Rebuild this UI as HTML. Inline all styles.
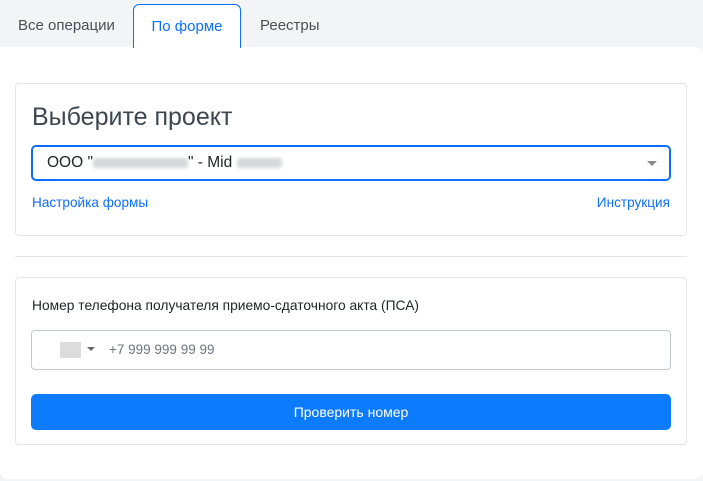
<!DOCTYPE html><html><head><meta charset="utf-8"><style>
*{box-sizing:border-box;margin:0;padding:0}
body{width:703px;height:481px;background:#f3f4f6;font-family:"Liberation Sans",sans-serif;position:relative;overflow:hidden;color:#212529}
.tab{position:absolute;top:4px;height:44px;line-height:44px;font-size:15px;color:#495057}
.act{left:133px;width:108px;border:1px solid #0d6efd;border-bottom:none;border-radius:6px 6px 0 0;background:#fff;text-align:center;color:#0d6efd;z-index:2}
.panel{position:absolute;left:0;top:47px;width:703px;height:432px;background:#fff;border-radius:0 8px 8px 8px}
.card{position:absolute;left:15px;width:672px;border:1px solid #e3e5e8;border-radius:4px;background:#fff}
a{color:#0d6efd;text-decoration:none;font-size:13.6px;position:absolute}
.blur{display:inline-block;height:10px;background:#d6d8dc;border-radius:3px;filter:blur(1.5px);vertical-align:middle}
</style></head><body>
<div class="tab" style="left:18px">Все операции</div>
<div class="tab act">По форме</div>
<div class="tab" style="left:260px">Реестры</div>
<div class="panel">
<div class="card" style="top:36px;height:153px">
<div style="position:absolute;left:16px;top:19px;font-size:25px;color:#3d4752">Выберите проект</div>
<div style="position:absolute;left:15px;top:61px;width:640px;height:36px;border:2px solid #0d6efd;border-radius:5px;font-size:15.5px;line-height:32px;padding-left:14px">ООО "<span class="blur" style="width:95px"></span>" - Mid <span class="blur" style="width:45px"></span>
<span style="position:absolute;right:12px;top:14px;border:5px solid transparent;border-top:5px solid #888"></span></div>
<a style="left:16px;top:111px">Настройка формы</a>
<a style="right:16px;top:111px">Инструкция</a>
</div>
<div style="position:absolute;left:15px;top:209px;width:672px;border-top:1px solid #e3e5e8"></div>
<div class="card" style="top:230px;height:168px">
<div style="position:absolute;left:16px;top:20px;font-size:13.8px">Номер телефона получателя приемо-сдаточного акта (ПСА)</div>
<div style="position:absolute;left:15px;top:52px;width:640px;height:40px;border:1px solid #c4c9d0;border-radius:4px">
<span style="position:absolute;left:28px;top:11px;width:21px;height:16px;background:#dcdcdc"></span>
<span style="position:absolute;left:55px;top:16px;border:4px solid transparent;border-top:4px solid #666"></span>
<span style="position:absolute;left:77px;top:11px;font-size:13.5px;color:#6c757d">+7 999 999 99 99</span></div>
<div style="position:absolute;left:15px;top:116px;width:640px;height:36px;background:#0d7bfd;border-radius:5px;color:#fff;font-size:14px;text-align:center;line-height:36px">Проверить номер</div>
</div>
</div>
</body></html>
